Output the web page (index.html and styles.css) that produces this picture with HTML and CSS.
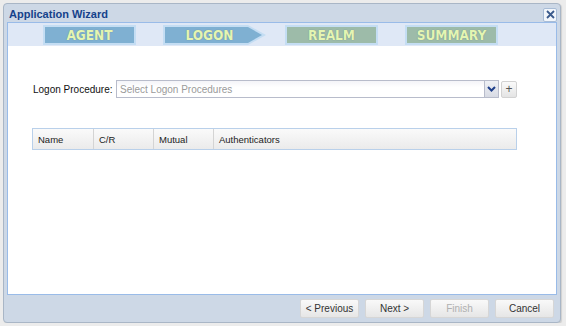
FILE: index.html
```html
<!DOCTYPE html>
<html lang="en">
<head>
    <meta charset="UTF-8">
    <title>Application Wizard</title>
    <link rel="stylesheet" href="styles.css">
</head>
<body>
    <div class="window">
        <div class="window-header">
            <span class="window-title">Application Wizard</span>
            <span class="close-btn">
                <svg width="9" height="9" viewBox="0 0 9 9"><path d="M1 1 L8 8 M8 1 L1 8" stroke="#3a5a8c" stroke-width="1.8"/></svg>
            </span>
        </div>
        <div class="panel">
            <div class="steps">
                <div class="step step-done"><span>AGENT</span></div>
                <div class="step step-current"><span>LOGON</span></div>
                <div class="step step-todo"><span>REALM</span></div>
                <div class="step step-todo"><span>SUMMARY</span></div>
            </div>

            <div class="form-row">
                <label class="field-label">Logon Procedure:</label>
                <div class="combo">
                    <input type="text" placeholder="Select Logon Procedures">
                    <span class="combo-trigger">
                        <svg width="9" height="6" viewBox="0 0 9 6"><path d="M1 1 L4.5 4.5 L8 1" fill="none" stroke="#1e3f8a" stroke-width="2"/></svg>
                    </span>
                </div>
                <span class="add-btn">+</span>
            </div>

            <div class="grid">
                <div class="grid-header">
                    <div class="col col-name">Name</div>
                    <div class="col col-cr">C/R</div>
                    <div class="col col-mutual">Mutual</div>
                    <div class="col col-auth">Authenticators</div>
                </div>
            </div>
        </div>
        <div class="footer">
            <button class="btn">&lt; Previous</button>
            <button class="btn">Next &gt;</button>
            <button class="btn" disabled>Finish</button>
            <button class="btn">Cancel</button>
        </div>
    </div>
</body>
</html>
```

FILE: styles.css
```css
* {
    box-sizing: border-box;
}
body {
    margin: 0;
    padding: 3px 4px 0 3px;
    background-color: #ececec;
    font-family: 'Liberation Sans', Arial, sans-serif;
    font-size: 11px;
    color: #000;
}
.window {
    width: 558px;
    height: 320px;
    background: #cdd8e6;
    border: 1px solid #a9b6c6;
    border-radius: 4px;
    box-shadow: 1px 1px 1px rgba(0, 0, 0, 0.12);
    display: flex;
    flex-direction: column;
}
.window-header {
    height: 18px;
    display: flex;
    align-items: center;
    justify-content: space-between;
    padding: 0 3px 0 5px;
}
.window-title {
    font-weight: bold;
    color: #15428b;
    font-size: 11px;
    margin-top: 1px;
}
.close-btn {
    width: 14px;
    height: 14px;
    background: #f2f6fb;
    border: 1px solid #a8bcd6;
    border-radius: 2px;
    display: flex;
    align-items: center;
    justify-content: center;
    margin-top: 3px;
}
.panel {
    margin: 0 3px;
    height: 273px;
    background: #fff;
    border: 1px solid #99bbe8;
}
.steps {
    height: 23px;
    background: #dfe8f6;
    display: flex;
    align-items: center;
    padding-left: 35px;
}
.step {
    height: 20px;
    width: 93px;
    border: 2px solid #c4ddf3;
    display: flex;
    align-items: center;
    justify-content: center;
    margin-right: 27px;
}
.step span {
    font-family: 'DejaVu Sans Condensed', 'DejaVu Sans', sans-serif;
    font-weight: bold;
    font-size: 13.5px;
    color: #e4f5b2;
    text-shadow: 0 0 1px #5f8088;
}
.step-done {
    background: #7fb0d2;
}
.step-current {
    background: #7fb0d2;
    width: 85px;
    margin-right: 37px;
    position: relative;
    border-right: none;
    padding-left: 6px;
}
.step-current::after {
    content: "";
    position: absolute;
    right: -18px;
    top: -2px;
    border-left: 18px solid #c4ddf3;
    border-top: 10px solid transparent;
    border-bottom: 10px solid transparent;
}
.step-current::before {
    content: "";
    position: absolute;
    right: -14px;
    top: 0;
    border-left: 14px solid #7fb0d2;
    border-top: 8px solid transparent;
    border-bottom: 8px solid transparent;
    z-index: 1;
}
.step-todo {
    background: #9dbba9;
}
.form-row {
    display: flex;
    align-items: center;
    margin: 34px 0 0 25px;
}
.field-label {
    width: 83px;
    white-space: nowrap;
    font-size: 10px;
    color: #111;
}
.combo {
    display: flex;
    width: 383px;
    height: 18px;
    border: 1px solid #b8bccb;
}
.combo input {
    flex: 1;
    min-width: 0;
    border: none;
    padding: 0 3px;
    font-family: inherit;
    font-size: 10px;
    background: linear-gradient(#f4f4f8, #fff 40%);
    outline: none;
}
.combo input::placeholder {
    color: #9a9a9a;
}
.combo-trigger {
    width: 14px;
    background: linear-gradient(#eef0f5, #d8dbe4);
    border-left: 1px solid #b8bccb;
    display: flex;
    align-items: center;
    justify-content: center;
}
.add-btn {
    width: 16px;
    height: 17px;
    margin-left: 2px;
    border: 1px solid #d2d2d2;
    border-radius: 2px;
    background: linear-gradient(#fafafa, #e4e4e4);
    color: #555;
    font-size: 12px;
    display: flex;
    align-items: center;
    justify-content: center;
}
.grid {
    margin: 30px 0 0 24px;
    width: 485px;
}
.grid-header {
    display: flex;
    height: 22px;
    border: 1px solid #b9d0ea;
    background: linear-gradient(#fafafa, #ebebeb);
}
.col {
    display: flex;
    align-items: center;
    padding-left: 5px;
    border-right: 1px solid #d4d4d4;
    color: #222;
    font-size: 9.5px;
}
.col-name { width: 61px; }
.col-cr { width: 60px; }
.col-mutual { width: 60px; }
.col-auth { flex: 1; border-right: none; }
.footer {
    display: flex;
    justify-content: flex-end;
    gap: 6px;
    padding: 4px 6px 0 0;
}
.btn {
    width: 59px;
    height: 19px;
    border: 1px solid #d6d6d6;
    border-radius: 2px;
    background: linear-gradient(#f9f9f9, #e6e6e6);
    font-family: inherit;
    font-size: 10px;
    color: #333;
    padding: 0;
}
.btn:disabled {
    color: #b0b0b0;
}
```
